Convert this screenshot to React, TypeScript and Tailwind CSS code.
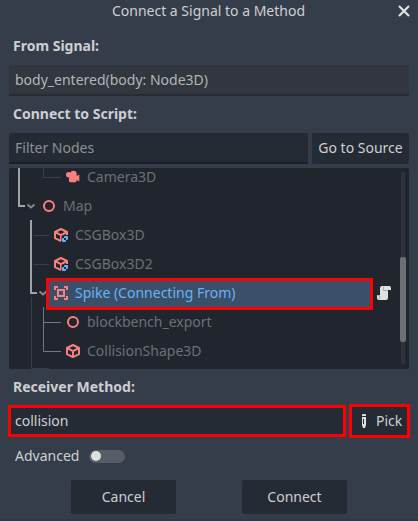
import type { ReactNode } from 'react'

const RED = '#fc7f7f'

function Icon({ children }: { children: ReactNode }) {
  return (
    <svg width="16" height="16" viewBox="0 0 16 16" fill="none" className="shrink-0">
      {children}
    </svg>
  )
}

const CameraIcon = () => (
  <Icon>
    <g fill={RED}>
      <circle cx="8.500" cy="5" r="3.200" />
      <circle cx="3.700" cy="5.800" r="2.700" />
      <path d="M3 6h8.500v1.300L14.300 5.500v7l-2.800-1.600V12a1.200 1.200 0 0 1-1.200 1.200H5.200A1.200 1.200 0 0 1 4 12V8z" />
    </g>
  </Icon>
)

const NodeIcon = () => (
  <Icon>
    <circle cx="8" cy="8" r="5" stroke={RED} strokeWidth="2" />
  </Icon>
)

const CubeIcon = () => (
  <Icon>
    <path
      d="M8 2 14 5v6.200L8 14.100 2 11.200V5zM2 5l6 3.100L14 5M8 8v6"
      stroke={RED}
      strokeWidth="2"
      strokeLinejoin="round"
    />
  </Icon>
)

const CsgBoxIcon = () => (
  <Icon>
    <path
      d="M8 14.100 2 11.200V5l6-3L14 5v3M2 5l6 3.100L14 5M8 8v6"
      stroke={RED}
      strokeWidth="2"
      strokeLinejoin="round"
    />
    <path d="M8.500 9.500 10 8h6v8H8.500z" fill="#21262e" />
    <path
      d="M12 9a1 1 0 0 0-1 1v1h2v2h1a1 1 0 0 0 1-1v-2a1 1 0 0 0-1-1zm1 4h-2v-2h-1a1 1 0 0 0-1 1v2a1 1 0 0 0 1 1h2a1 1 0 0 0 1-1z"
      fill="#5fb2ff"
    />
  </Icon>
)

const AreaIcon = () => (
  <Icon>
    <path
      fill={RED}
      fillRule="evenodd"
      d="M1 1v4h2V3h2V1zm10 0v2h2v2h2V1zM4 4v8h8V4zm2 2h4v4H6zM1 11v4h4v-2H3v-2zm12 0v2h-2v2h4v-4z"
    />
  </Icon>
)

const ScriptIcon = () => (
  <Icon>
    <path
      fill="#e0e0e0"
      d="M6 1a2 2 0 0 0-2 2v7H1v3a2 2 0 0 0 2 2h7a2 2 0 0 0 2-2V5h3V3a2 2 0 0 0-2-2z"
    />
    <path d="M7.500 2v3.500H12M1.500 10.500h2.200V14" stroke="#a9abae" />
  </Icon>
)

function TreeRow({ indent, icon, label }: { indent: string; icon: ReactNode; label: string }) {
  return (
    <div className={`flex h-[29px] items-center gap-[6px] text-[#6c6f75] ${indent}`}>
      {icon}
      <span>{label}</span>
    </div>
  )
}

function TreeLines() {
  return (
    <svg width="400" height="201" viewBox="9 168 400 201" fill="none" className="absolute left-0 top-0">
      <path d="M43.5 168v9.5H61M34 235.5h15M34 264.5h15M31.5 297v71.5H49" stroke="#3a3e45" />
      <path d="M43.5 307v44.500H61M43.500 322.500H61" stroke="#75787d" />
      <path d="M19 168v38h6M31 220v73h6" stroke="#a1a3a6" strokeWidth="2" />
      <path d="m27.500 204.500 3.500 3 3.500-3M39.500 291.500l3.500 3 3.500-3" stroke="#85888c" strokeWidth="2" />
    </svg>
  )
}

const Heading = ({ children }: { children: ReactNode }) => (
  <h2 className="flex h-[37px] items-center pb-[2px] pl-1 font-bold">{children}</h2>
)

export default function App() {
  return (
    <main className="h-[521px] w-[418px] overflow-hidden border-b-2 border-[#303746] bg-[#363d4a] font-['Noto_Sans',sans-serif] text-[14px] leading-5 text-[#cdcfd2]">
      <header className="grid h-[22px] grid-cols-[27px_1fr_28px] items-center">
        <span />
        <h1 className="text-center">Connect a Signal to a Method</h1>
        <button className="flex justify-center" aria-label="Close">
          <svg width="12" height="12" viewBox="0 0 12 12">
            <path d="m1 1 10 10M11 1 1 11" stroke="#e0e0e0" strokeWidth="2.2" />
          </svg>
        </button>
      </header>

      <div className="px-[9px] pt-[6px]">
        <Heading>From Signal:</Heading>
        <div className="flex h-[31px] items-center rounded-t-[2px] border-b-2 border-[#262b34] bg-[#31363f] pl-[6px] text-[#b2b5b9]">
          body_entered(body: Node3D)
        </div>

        <Heading>Connect to Script:</Heading>
        <div className="flex h-[31px] gap-1">
          <div className="flex w-[299px] items-center rounded-t-[2px] border-b-2 border-[#1b2027] bg-[#252b34] pl-[6px] text-[#8d9095]">
            Filter Nodes
          </div>
          <button className="flex-1 rounded-[2px] bg-[#252b34] pb-[2px] whitespace-nowrap">Go to Source</button>
        </div>

        <section className="relative mt-1 h-[201px] overflow-hidden rounded-[2px] bg-[#21262e]">
          <TreeLines />
          <div className="relative -mt-[6px]">
            <TreeRow indent="pl-[56px]" icon={<CameraIcon />} label="Camera3D" />
            <TreeRow indent="pl-[32px]" icon={<NodeIcon />} label="Map" />
            <TreeRow indent="pl-[44px]" icon={<CsgBoxIcon />} label="CSGBox3D" />
            <TreeRow indent="pl-[44px]" icon={<CsgBoxIcon />} label="CSGBox3D2" />
            <div className="flex h-[29px] items-start">
              <div className="ml-[37px] flex h-8 w-[327px] shrink-0 items-center gap-[6px] border-[3px] border-[#ff0000] bg-[#3a5068] pb-[2px] pl-1 text-[#68b3f5]">
                <AreaIcon />
                <span>Spike (Connecting From)</span>
              </div>
              <div className="ml-[3px] mt-[7px]">
                <ScriptIcon />
              </div>
            </div>
            <TreeRow indent="pl-[56px]" icon={<NodeIcon />} label="blockbench_export" />
            <TreeRow indent="pl-[56px]" icon={<CubeIcon />} label="CollisionShape3D" />
          </div>
          <div className="absolute right-1 top-1 h-[193px] w-1 rounded-full bg-[#2e333b]" />
          <div className="absolute right-[3px] top-[89px] h-[85px] w-[6px] rounded-[2px] bg-[#6c6f74]" />
        </section>

        <Heading>Receiver Method:</Heading>
        <div className="-ml-px -mr-px -mt-[2px] flex items-center gap-[3px]">
          <div className="flex h-8 w-[338px] items-center border-[3px] border-[#ff0000] bg-[#252b34] pl-1">
            collision
          </div>
          <button className="flex h-[34px] w-[61px] items-center border-[3px] border-[#ff0000] bg-[#252b34] pl-1">
            <Icon>
              <path fill="#e0e0e0" d="M6 2a1 1 0 0 1 1-1h2a1 1 0 0 1 1 1v1H6zM6 4h4v8l-1 3H7l-1-3z" />
              <path d="M7.500 6v5" stroke="#252b34" />
            </Icon>
            <span className="ml-1">Pick</span>
          </button>
        </div>

        <div className="flex h-9 items-center gap-[10px] pl-[6px]">
          <span>Advanced</span>
          <div className="flex h-[13px] w-9 items-center rounded-full bg-[#575d67] pl-[2px]">
            <div className="size-[10px] rounded-full bg-[#e0e0e0]" />
          </div>
        </div>

        <footer className="mt-[6px] flex gap-[66px] pl-[62px]">
          <button className="h-[34px] w-[105px] rounded-[2px] bg-[#252b34]">Cancel</button>
          <button className="h-[34px] w-[105px] rounded-[2px] bg-[#252b34]">Connect</button>
        </footer>
      </div>
    </main>
  )
}
